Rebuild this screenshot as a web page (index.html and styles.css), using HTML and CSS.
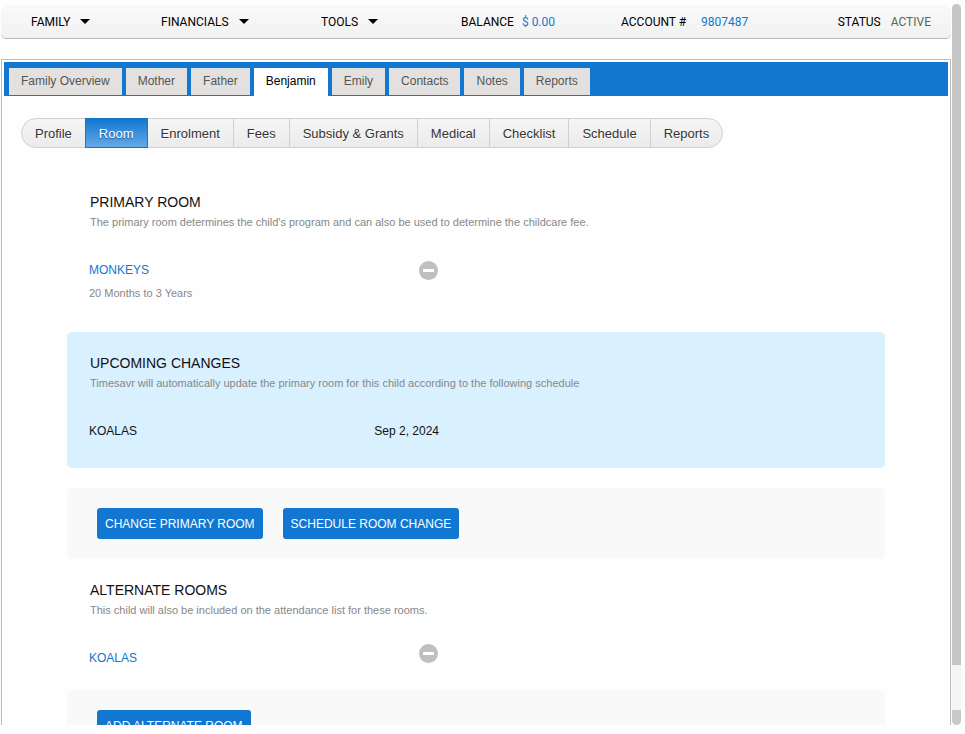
FILE: index.html
```html
<!DOCTYPE html>
<html lang="en">
<head>
  <meta charset="UTF-8">
  <meta name="viewport" content="width=device-width, initial-scale=1">
  <title>Family Account - Room</title>
  <link rel="stylesheet" href="styles.css">
</head>
<body>
  <div class="page">
    <div class="main">

      <!-- TOP MENU -->
      <header class="topbar">
        <button type="button" class="menu">FAMILY <span class="caret"></span></button>
        <button type="button" class="menu">FINANCIALS <span class="caret"></span></button>
        <button type="button" class="menu">TOOLS <span class="caret"></span></button>
        <div class="info">BALANCE <a href="#">$ 0.00</a></div>
        <div class="info account">ACCOUNT # <a href="#">9807487</a></div>
        <div class="info status">STATUS <span class="active-status">ACTIVE</span></div>
      </header>

      <div class="panel">
        <!-- FAMILY MEMBERS -->
        <nav class="tabs">
          <a href="#" class="tab">Family Overview</a>
          <a href="#" class="tab">Mother</a>
          <a href="#" class="tab">Father</a>
          <a href="#" class="tab selected">Benjamin</a>
          <a href="#" class="tab">Emily</a>
          <a href="#" class="tab">Contacts</a>
          <a href="#" class="tab">Notes</a>
          <a href="#" class="tab">Reports</a>
        </nav>

        <!-- CHILD SECTIONS -->
        <nav class="pills">
          <a href="#" class="pill">Profile</a>
          <a href="#" class="pill selected">Room</a>
          <a href="#" class="pill">Enrolment</a>
          <a href="#" class="pill">Fees</a>
          <a href="#" class="pill">Subsidy &amp; Grants</a>
          <a href="#" class="pill">Medical</a>
          <a href="#" class="pill">Checklist</a>
          <a href="#" class="pill">Schedule</a>
          <a href="#" class="pill">Reports</a>
        </nav>

        <div class="rooms">
          <section class="block">
            <h2>PRIMARY ROOM</h2>
            <p class="hint">The primary room determines the child's program and can also be used to determine the childcare fee.</p>
            <div class="row">
              <a href="#">MONKEYS</a>
              <button type="button" class="remove" aria-label="Remove Monkeys">
                <svg viewBox="0 0 19 19" width="19" height="19"><circle cx="9.5" cy="9.5" r="9.5" fill="#bfbfbf"/><rect x="4" y="8" width="11" height="3" rx="0.5" fill="#fff"/></svg>
              </button>
            </div>
            <p class="hint ages">20 Months to 3 Years</p>
          </section>

          <section class="block upcoming">
            <h2>UPCOMING CHANGES</h2>
            <p class="hint">Timesavr will automatically update the primary room for this child according to the following schedule</p>
            <div class="row">
              <span>KOALAS</span>
              <span>Sep 2, 2024</span>
            </div>
          </section>

          <div class="actions">
            <button type="button" class="btn">CHANGE PRIMARY ROOM</button>
            <button type="button" class="btn">SCHEDULE ROOM CHANGE</button>
          </div>

          <section class="block alternate">
            <h2>ALTERNATE ROOMS</h2>
            <p class="hint">This child will also be included on the attendance list for these rooms.</p>
            <div class="row">
              <a href="#">KOALAS</a>
              <button type="button" class="remove" aria-label="Remove Koalas">
                <svg viewBox="0 0 19 19" width="19" height="19"><circle cx="9.5" cy="9.5" r="9.5" fill="#bfbfbf"/><rect x="4" y="8" width="11" height="3" rx="0.5" fill="#fff"/></svg>
              </button>
            </div>
          </section>

          <div class="actions">
            <button type="button" class="btn">ADD ALTERNATE ROOM</button>
          </div>
        </div>
      </div>
    </div>

    <!-- SCROLLBAR -->
    <div class="scrollbar">
      <div class="thumb"></div>
      <div class="track"></div>
      <div class="end"></div>
    </div>
  </div>
</body>
</html>
```

FILE: styles.css
```css
* {
  box-sizing: border-box;
}

body {
  margin: 0;
  background: #fefefe;
  color: #111;
  font-family: "Liberation Sans", Arial, sans-serif;
  font-size: 12px;
}

a {
  color: #1177d1;
  text-decoration: none;
}

button {
  border: 0;
  padding: 0;
  background: none;
  color: inherit;
  font: inherit;
  cursor: pointer;
}

.page {
  display: flex;
  gap: 1px;
  height: 100vh;
  padding: 4px 4px 9px 1px;
}

.main {
  flex: 1;
  overflow: hidden;
  padding-top: 1px;
}

/* Top menu */
.topbar {
  display: grid;
  grid-template-columns: 130fr 160fr 140fr 160fr 160fr 150fr;
  align-items: center;
  height: 34px;
  padding: 0 20px 0 30px;
  border-bottom: 1px solid #bbb;
  border-radius: 5px;
  background: linear-gradient(#fafafa, #f1f1f1);
  color: #000;
  font-family: Roboto, sans-serif;
}

.menu {
  display: flex;
  align-items: center;
  gap: 10px;
}

.caret {
  border: 5px solid transparent;
  border-top-color: #000;
  border-bottom: 0;
}

.info {
  display: flex;
  gap: 8px;
  white-space: nowrap;
}

.account {
  gap: 15px;
}

.status {
  gap: 10px;
  justify-content: flex-end;
}

.active-status {
  color: #556b4f;
}

/* Main panel */
.panel {
  margin-top: 20px;
  padding: 2px;
  border: 1px solid #bbb;
}

.tabs {
  display: flex;
  gap: 4px;
  height: 34px;
  padding: 6px 5px 0;
  background: #1177d1;
}

.tab {
  height: 27px;
  padding: 0 12px;
  background: #e3e1df;
  color: #555;
  line-height: 26px;
}

.tab.selected {
  height: 28px;
  background: #fefefe;
  color: #000;
}

.pills {
  display: flex;
  width: fit-content;
  height: 30px;
  margin: 22px 17px 0;
  border: 1px solid #d0d0d0;
  border-radius: 15px;
  background: linear-gradient(#f5f5f5, #ebebeb);
  font-size: 13px;
}

.pill {
  padding: 0 13px;
  border-left: 1px solid #d0d0d0;
  color: #333;
  line-height: 29px;
  text-shadow: 0 1px 0 #fff;
}

.pill:first-child {
  border-left: 0;
}

.pill.selected {
  margin: -1px 0;
  border: 1px solid #1177d1;
  background: linear-gradient(#1177d1, #65a9e6);
  color: #fff;
  text-shadow: 0 1px 1px #1a5a9c;
}

.pill.selected + .pill {
  border-left: 0;
}

/* Rooms */
.rooms {
  margin: 23px 63px 0;
}

.block {
  padding: 22px 22px 0;
  border-radius: 5px;
}

h2 {
  margin: 0;
  font-size: 14px;
  font-weight: normal;
  line-height: 18px;
}

.hint {
  margin: 3px 0 0;
  color: #888;
  font-size: 11px;
  line-height: 16px;
}

h2,
h2 + .hint {
  padding-left: 1px;
}

.hint.ages {
  margin-top: 5px;
}

.row {
  display: flex;
  justify-content: space-between;
  align-items: center;
  max-width: 350px;
  height: 20px;
  margin-top: 30px;
}

.remove {
  width: 20px;
  height: 20px;
}

.remove svg {
  display: block;
}

.upcoming {
  height: 136px;
  margin-top: 31px;
  background: #d9f0ff;
}

.alternate .row {
  align-items: flex-start;
  height: 27px;
  margin-top: 25px;
  line-height: 30px;
}

.actions {
  display: flex;
  gap: 20px;
  margin-top: 20px;
  padding: 20px 30px;
  border-radius: 5px;
  background: #f9f9f9;
}

.btn {
  height: 31px;
  padding: 0 8px;
  border-radius: 3px;
  background: #1177d1;
  color: #fff;
}

/* Scrollbar */
.scrollbar {
  display: flex;
  flex-direction: column;
  width: 9px;
  overflow: hidden;
  border-radius: 5px;
  background: #f5f5f3;
}

.thumb {
  flex: 44;
  background: #c6c6c6;
}

.track {
  flex: 3;
}

.end {
  height: 15px;
  background: #c9c9c9;
}
```
